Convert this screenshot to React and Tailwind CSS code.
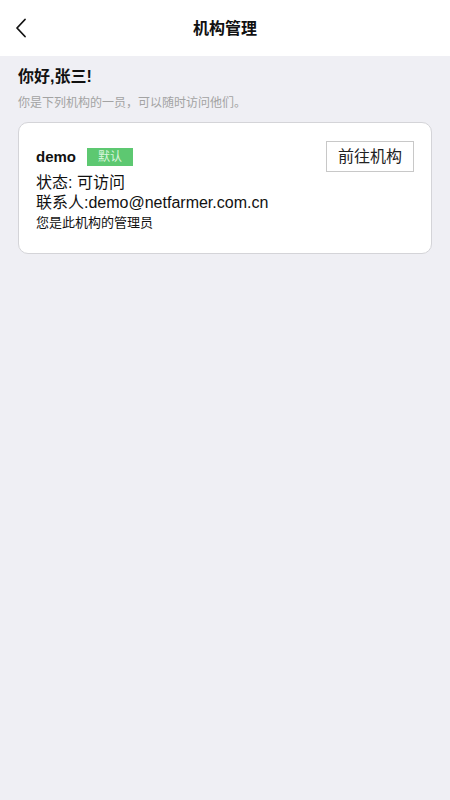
const FONT = { fontFamily: '"Liberation Sans", "Noto Sans CJK SC", sans-serif' };

function Header() {
  return (
    <div className="relative flex h-14 items-center justify-center bg-white">
      <button className="absolute left-[14px] top-0 flex h-14 w-[16px] items-center">
        <svg width="14" height="20" viewBox="0 0 14 20" fill="none">
          <path d="M11 1.5 L3 10 L11 18.5" stroke="#111" strokeWidth="1.8" strokeLinecap="round" strokeLinejoin="round" />
        </svg>
      </button>
      <h1 className="pt-[2px] text-[16px] font-bold text-[#111]">机构管理</h1>
    </div>
  );
}

function OrgCard({ org }) {
  return (
    <div className="mt-[10px] rounded-[10px] border border-[#d4d4d8] bg-white pb-[21px] pl-[17px] pr-[17px] pt-[18px]">
      <div className="flex h-[31px] items-center justify-between">
        <div className="flex items-center">
          <span className="text-[15px] font-bold leading-[18px] text-[#111]">{org.name}</span>
          {org.isDefault && (
            <span className="ml-[11px] flex h-[18px] w-[46px] items-center justify-center bg-[#5dc871] text-[12px] text-[#d9f5dd]">
              默认
            </span>
          )}
        </div>
        <button className="flex h-[31px] w-[88px] items-center justify-center border border-[#c8c8c8] text-[16px] text-[#222]">
          前往机构
        </button>
      </div>
      <p className="mt-[1px] text-[16px] leading-[20px] text-[#111]">状态: {org.status}</p>
      <p className="text-[16px] leading-[20px] text-[#111]">联系人:{org.contact}</p>
      <p className="mt-[1px] text-[13px] leading-[18px] text-[#111]">您是此机构的管理员</p>
    </div>
  );
}

export default function App() {
  const org = { name: 'demo', isDefault: true, status: '可访问', contact: 'demo@netfarmer.com.cn' };

  return (
    <div className="min-h-[800px] bg-[#efeff4]" style={FONT}>
      <Header />
      <div className="px-[18px] pt-[10px]">
        <h2 className="text-[16px] font-bold leading-[22px] text-[#111]">你好,张三!</h2>
        <p className="mt-[6px] text-[12px] leading-[18px] text-[#a3a3a3]">你是下列机构的一员，可以随时访问他们。</p>
        <OrgCard org={org} />
      </div>
    </div>
  );
}
